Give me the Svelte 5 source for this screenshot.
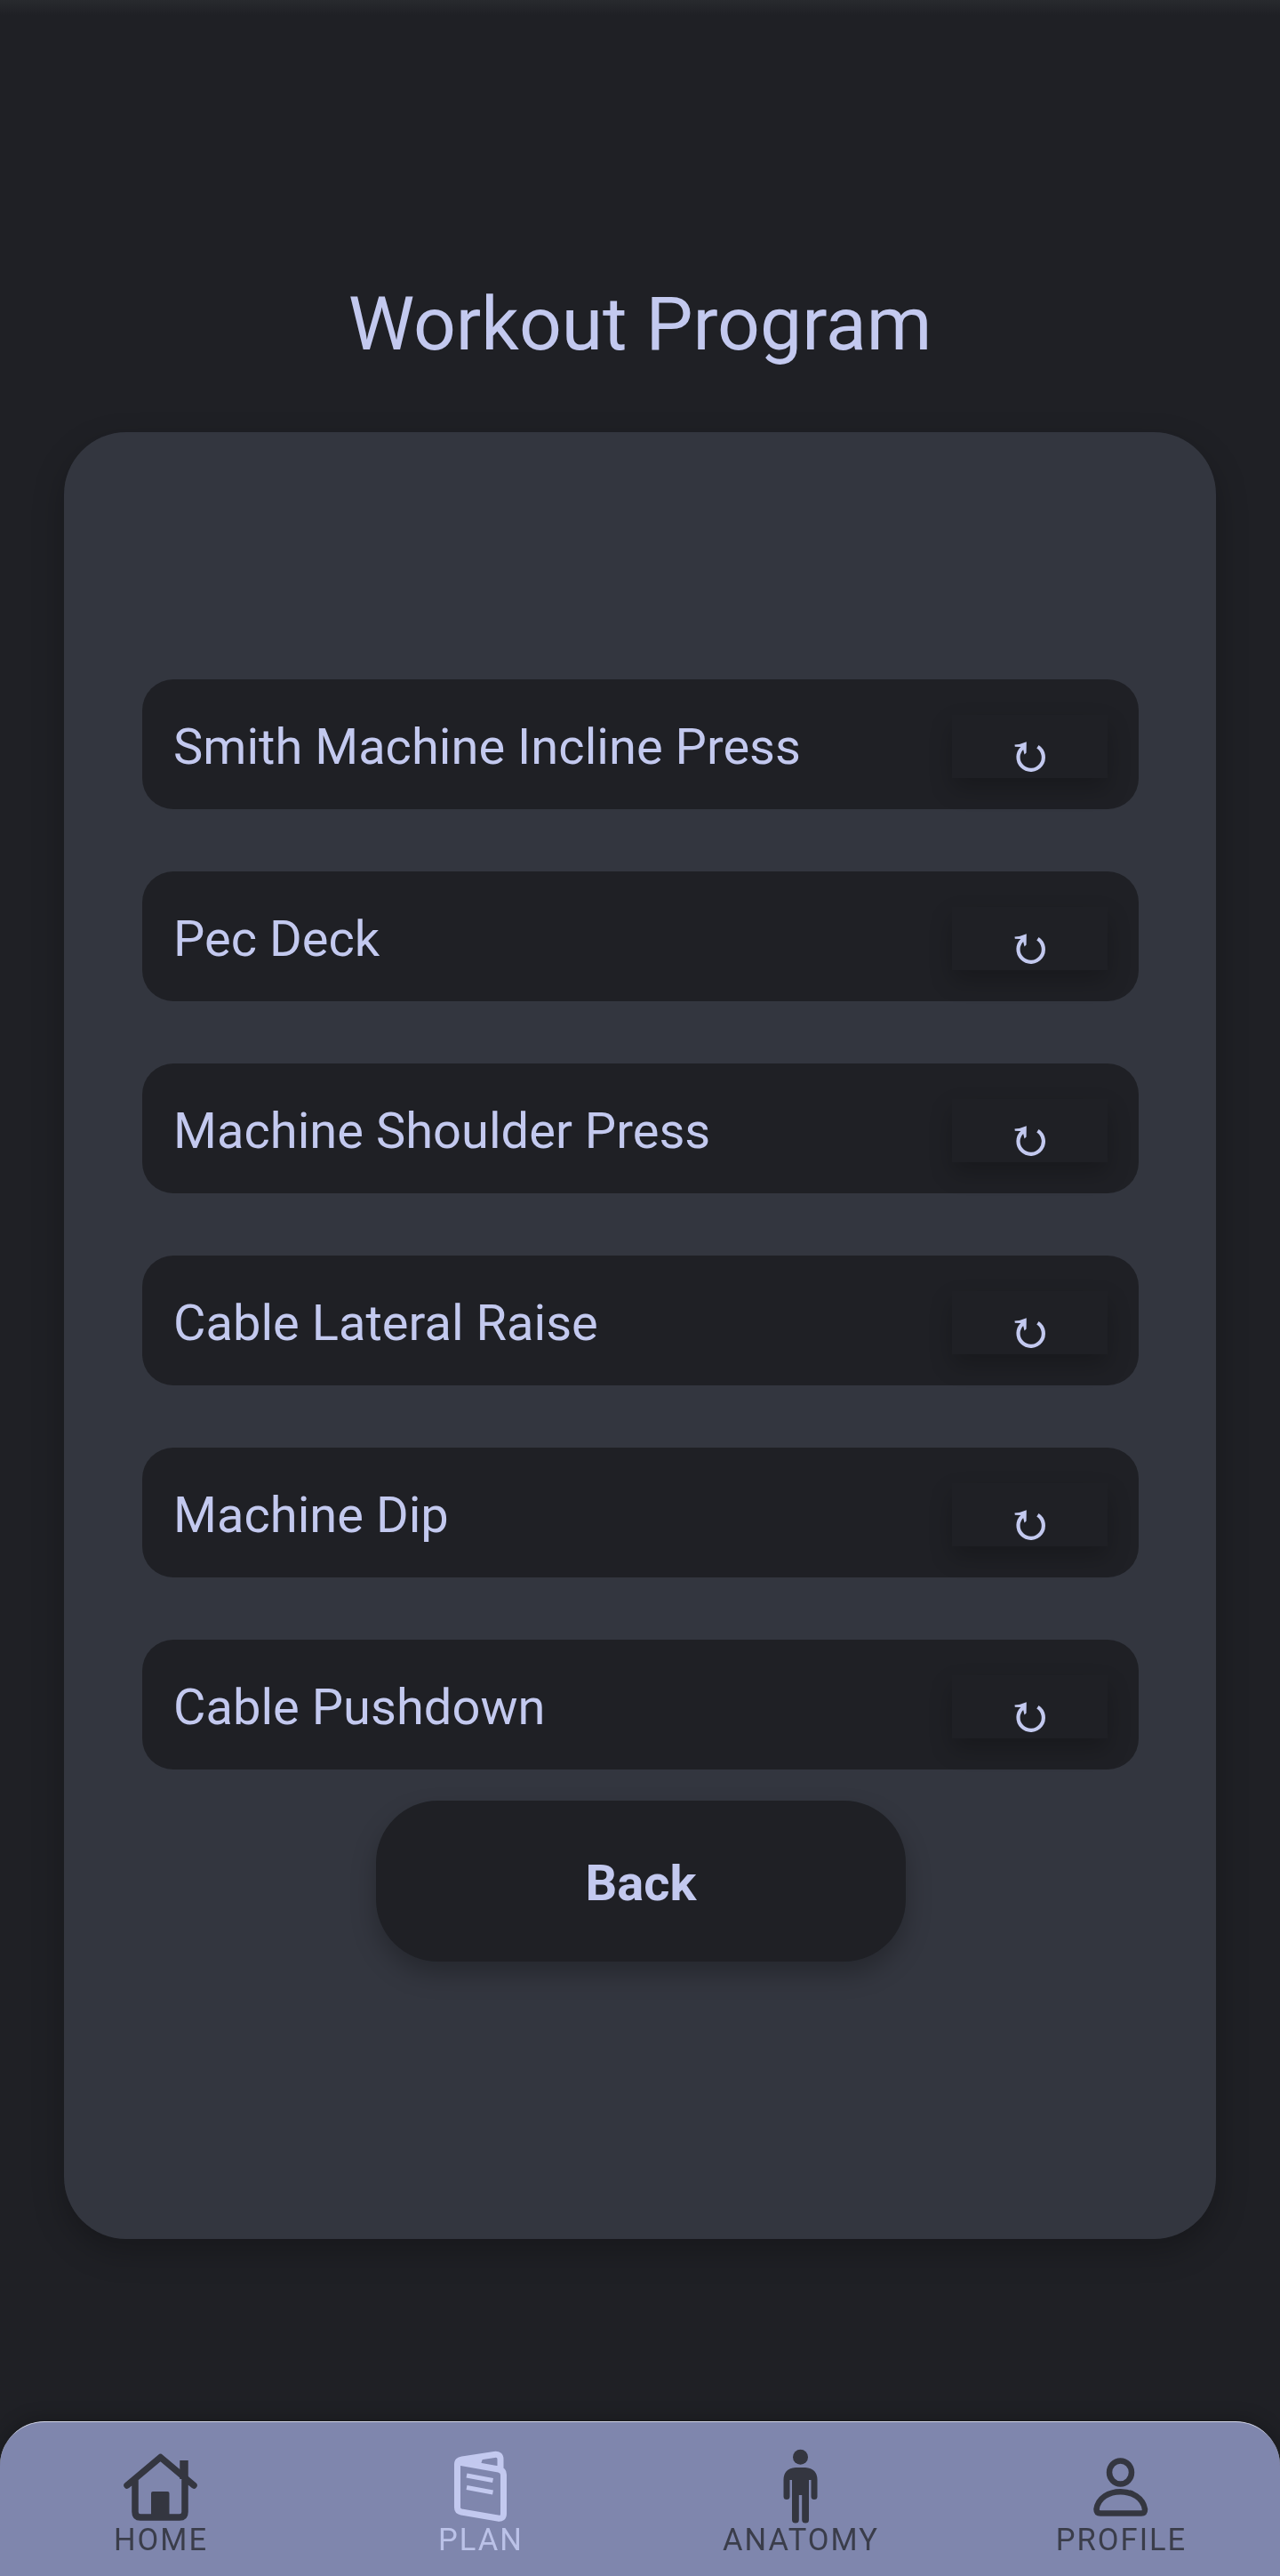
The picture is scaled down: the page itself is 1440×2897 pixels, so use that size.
<script>
  const exercises = [
    'Smith Machine Incline Press',
    'Pec Deck',
    'Machine Shoulder Press',
    'Cable Lateral Raise',
    'Machine Dip',
    'Cable Pushdown'
  ];
</script>

<div class="screen">
  <h1>Workout Program</h1>
  <main class="card">
    <ul>
      {#each exercises as name}
        <li>
          <span>{name}</span>
          <button class="swap" aria-label="Replace {name}">
            <svg width="36" height="36" viewBox="0 0 36 36">
              <path d="M9.500 7.800A14.200 14.200 0 1 0 26.400 6.700" fill="none" stroke="currentColor" stroke-width="4.200" />
              <path d="M.5 4.600Q7 4.200 13.800 1.200L13.600 13.500 11.500 15.600 10 9.500 7 7 .8 6.800Z" fill="currentColor" />
            </svg>
          </button>
        </li>
      {/each}
    </ul>
    <button class="back">Back</button>
  </main>
  <nav>
    <a class="home" href="#home">
      <svg width="120" height="92" viewBox="0 0 120 92" fill="none" stroke="currentColor">
        <path d="M23 44 60.500 12.500 98 44M32 38V74Q32 80 38 80H82Q88 80 88 74V38" stroke-width="7.500" stroke-linejoin="round" stroke-linecap="round" />
        <path d="M87 16V37" stroke-width="9.500" />
        <rect x="50" y="51" width="20.500" height="29" rx="2" fill="currentColor" stroke="none" />
      </svg>
      <span>HOME</span>
    </a>
    <a class="plan" href="#plan">
      <svg width="120" height="92" viewBox="0 0 120 92" fill="none" stroke="currentColor">
        <path d="M35 18Q35 16 40 15L76 9.500Q83 8.500 83 15V25M36 18 81 26Q86.500 27 86.500 32V76Q86.500 82 80 81L39 74Q34.500 73 34.500 69V20Q34.500 18 36 18Z" stroke-width="7" stroke-linejoin="round" />
        <path d="M38 17 62 14 60 20Z" fill="currentColor" stroke-width="2" />
        <path d="M45 33 74.500 38.500M45 46.500 74.500 52" stroke-width="5" />
      </svg>
      <span>PLAN</span>
    </a>
    <a class="anatomy" href="#anatomy">
      <svg width="120" height="92" viewBox="0 0 120 92" fill="currentColor">
        <circle cx="60.500" cy="12.300" r="8.500" />
        <path d="M55 24H66Q79.500 25 79.500 38V56.500Q79.500 60 76 60T72.500 56.500V38H70V83Q70 86.500 66.200 86.500T62.200 83V55H58.800V83Q58.800 86.500 55 86.500T51 83V38H48.500V56.500Q48.500 60 45 60T41.500 56.500V38Q41.500 25 55 24Z" />
      </svg>
      <span>ANATOMY</span>
    </a>
    <a class="profile" href="#profile">
      <svg width="120" height="92" viewBox="0 0 120 92" fill="none" stroke="currentColor" stroke-width="6.500">
        <ellipse cx="60.500" cy="29.500" rx="12.500" ry="13" />
        <path d="M33.500 71C37 44.500 84 44.500 88 71Q88 75.500 84 75.500H38Q33.500 75.500 33.500 71Z" />
      </svg>
      <span>PROFILE</span>
    </a>
  </nav>
</div>

<style>
  :global(body) {
    margin: 0;
    background: #1f2025;
  }
  .screen {
    box-sizing: border-box;
    height: 2897px;
    display: flex;
    flex-direction: column;
    overflow: hidden;
    font-family: Roboto, sans-serif;
    color: #c3c9ef;
    background: linear-gradient(#282a2e, #1f2025 17px);
  }
  h1 {
    margin: 316px 0 72px;
    text-align: center;
    font-size: 84px;
    font-weight: 400;
    line-height: 98px;
  }
  .card {
    box-sizing: border-box;
    flex: none;
    height: 2032px;
    margin: 0 72px;
    padding: 278px 87px 0 88px;
    display: flex;
    flex-direction: column;
    align-items: center;
    border-radius: 70px;
    background: #33363f;
    box-shadow: 0 14px 35px rgba(0, 0, 0, 0.25);
  }
  ul {
    width: 100%;
    margin: 0 0 35px;
    padding: 0;
    display: grid;
    gap: 70px;
    list-style: none;
  }
  li {
    box-sizing: border-box;
    height: 146px;
    padding: 0 35px;
    display: flex;
    align-items: center;
    justify-content: space-between;
    border-radius: 35px;
    background: #1f2025;
    font-size: 56px;
    line-height: 66px;
    letter-spacing: 0.03px;
  }
  li span {
    padding-top: 6px;
  }
  button {
    border: 0;
    font: inherit;
    color: inherit;
    background: #1f2025;
    box-shadow: 0 14px 28px rgba(0, 0, 0, 0.25);
  }
  .swap {
    box-sizing: border-box;
    width: 175px;
    height: 71px;
    margin-top: 5px;
    padding: 29px 0 0 0;
    display: flex;
    align-items: flex-start;
    justify-content: center;
    box-shadow: 0 12px 26px rgba(0, 0, 0, 0.22);
  }
  .back {
    width: 596px;
    height: 181px;
    margin-left: 1px;
    padding: 4px 0 0;
    border-radius: 70px;
    font-size: 56px;
    font-weight: 700;
  }
  nav {
    box-sizing: border-box;
    flex: none;
    height: 174px;
    margin-top: auto;
    padding-top: 27px;
    display: grid;
    grid-template-columns: repeat(4, 1fr);
    border-top: 1px solid #d5d8ea;
    border-radius: 50px 50px 0 0;
    background: #7f86ad;
    box-shadow: 0 -4px 20px rgba(0, 0, 0, 0.2);
  }
  /* Tab icons and labels have slightly softened edges. */
  a {
    display: flex;
    flex-direction: column;
    align-items: center;
    color: #343640;
    text-decoration: none;
    font-size: 34.5px;
    line-height: 40px;
    letter-spacing: 2px;
    filter: blur(0.7px);
  }
  a span {
    margin: -7px -2px 0 0;
    opacity: 0.9;
  }
  .plan {
    color: #c3c9ef;
  }
  .profile span {
    margin-right: -3px;
  }
</style>
